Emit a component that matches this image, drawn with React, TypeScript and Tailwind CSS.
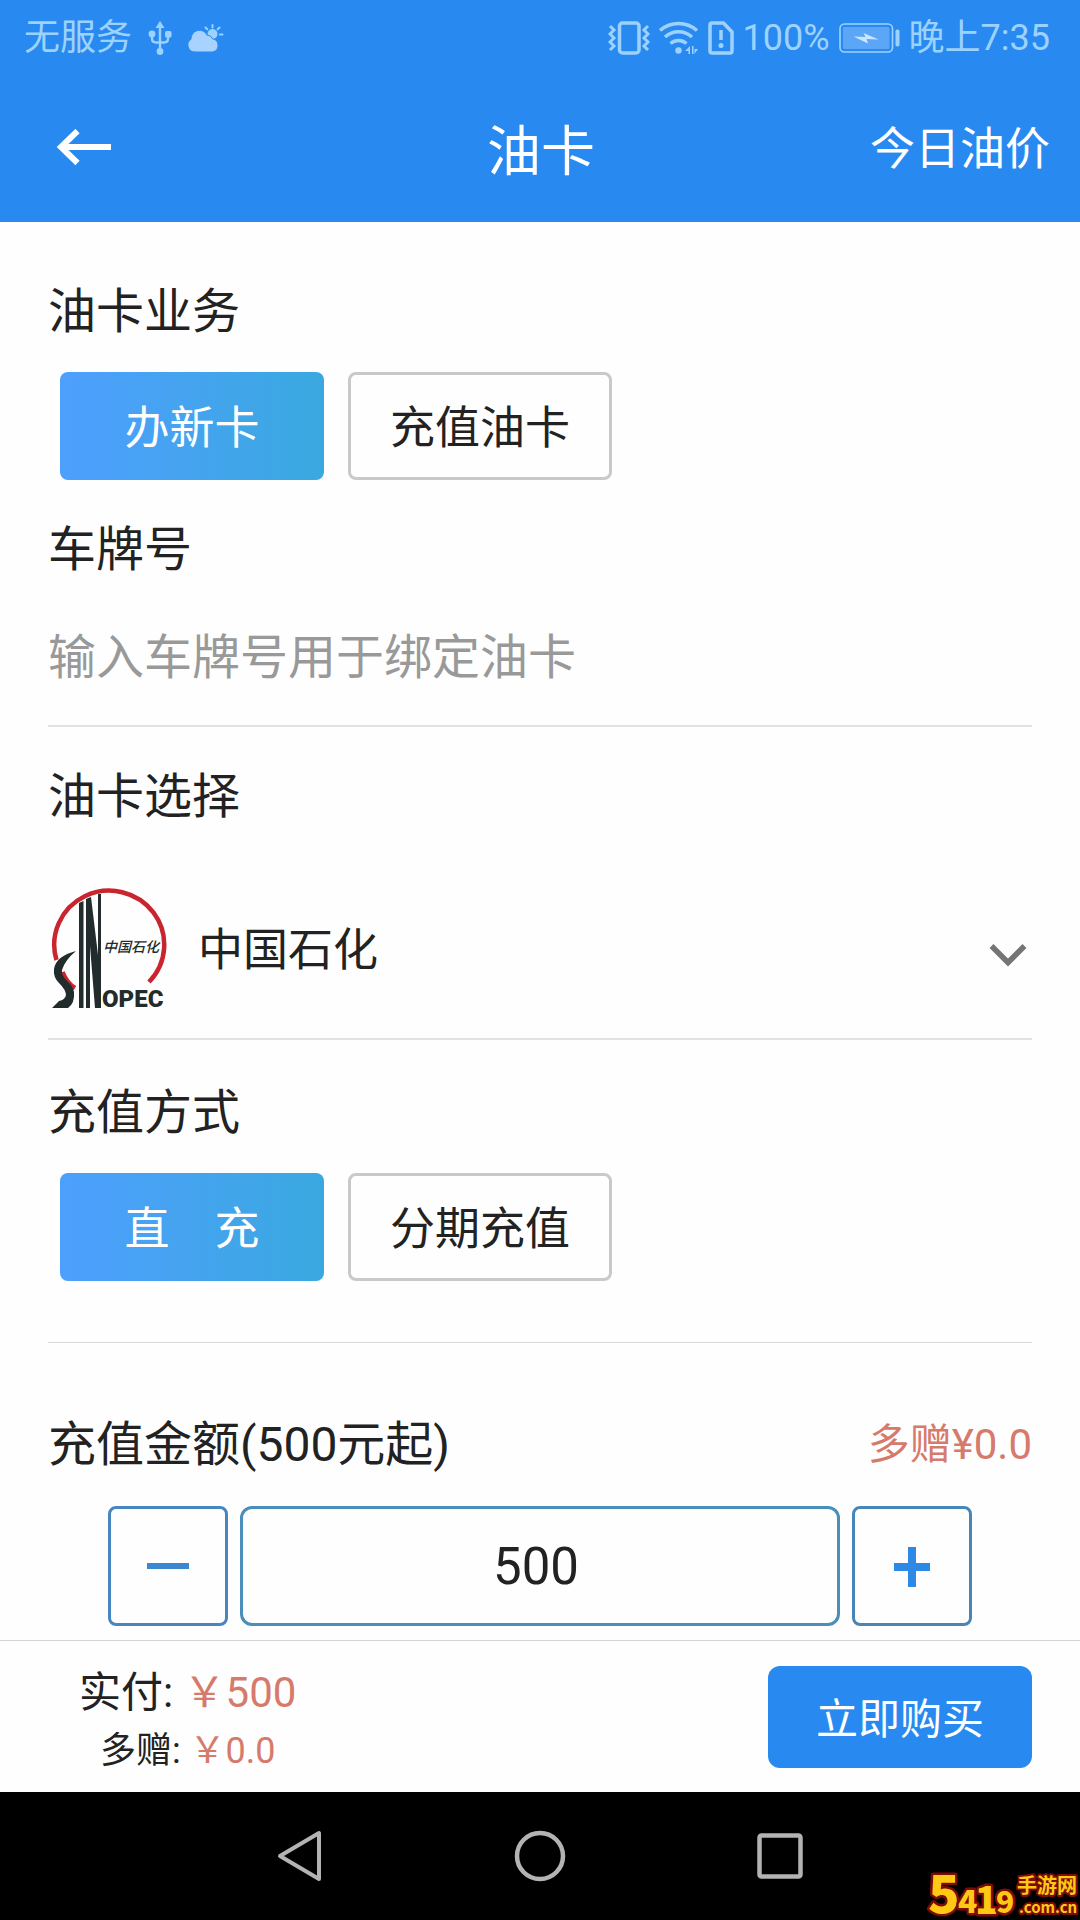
import React, { useState } from 'react';

const SERVICES = ['办新卡', '充值油卡'];
const METHODS = ['直　充', '分期充值'];
const CARDS = ['中国石化', '中国石油'];
const STEP = 100;
const MIN_AMOUNT = 500;

function UsbIcon() {
  return (
    <svg className="w-6 h-[34px]" viewBox="0 0 24 34" fill="none" stroke="currentColor" strokeWidth="2.400">
      <path d="M12 5v25M4 15v2.500q0 4 4 4h8q4 0 4-4V15" />
      <path d="M12 0l4.500 7h-9z" fill="currentColor" stroke="none" />
      <circle cx="4" cy="13" r="3.400" fill="currentColor" stroke="none" />
      <rect x="17" y="10" width="6.500" height="6.500" rx="1.500" fill="currentColor" stroke="none" />
      <circle cx="12" cy="30.500" r="3.400" fill="currentColor" stroke="none" />
    </svg>
  );
}

function WeatherIcon() {
  return (
    <svg className="w-9 h-[30px]" viewBox="0 0 36 30">
      <g stroke="currentColor" strokeWidth="2" strokeLinecap="round">
        <path d="M24.500 2v2.500M17.500 4.500l1.800 1.800M31.500 4.500l-1.800 1.800M32 11.500h2.500" />
      </g>
      <circle cx="24.500" cy="11" r="5" fill="currentColor" />
      <path
        d="M7 29a7 7 0 0 1-4-12.800 8.500 8.500 0 0 1 16.200-4 5.500 5.500 0 0 1 5.300 3.600 6.700 6.700 0 0 1 0 13.200z"
        fill="#a8d2ff"
        stroke="#288af0"
        strokeWidth="1"
      />
    </svg>
  );
}

function VibrateIcon() {
  return (
    <svg className="w-[42px] h-[34px]" viewBox="0 0 42 34" fill="none" stroke="currentColor">
      <rect x="11.500" y="2" width="19.500" height="30" rx="3" strokeWidth="3.500" />
      <path d="M2 5l4 4-4 4 4 4-4 4 4 4-4 4M40 5l-4 4 4 4-4 4 4 4-4 4 4 4" strokeWidth="3" />
    </svg>
  );
}

function WifiIcon() {
  return (
    <svg className="w-10 h-[34px]" viewBox="0 0 40 34" fill="none" stroke="currentColor" strokeWidth="3.400">
      <path d="M1 9.500a28 28 0 0 1 37 0M6 16a20 20 0 0 1 27 0M11.500 22.500a12 12 0 0 1 16 0" />
      <circle cx="19.500" cy="29.500" r="3.200" fill="currentColor" stroke="none" />
      <path d="M31 25v8h-1.500v-3H26zM33 25h1.500v8H33zM35.500 33v-5H39z" fill="currentColor" stroke="none" />
    </svg>
  );
}

function SimIcon() {
  return (
    <svg className="w-[26px] h-[34px]" viewBox="0 0 26 34" fill="none" stroke="currentColor" strokeWidth="3.500">
      <path d="M4 2h11.500l8.500 9v19q0 2-2 2H4q-2 0-2-2V4q0-2 2-2z" />
      <path d="M13 9v10" />
      <circle cx="13" cy="24.500" r="2.500" fill="currentColor" stroke="none" />
    </svg>
  );
}

function BatteryIcon() {
  return (
    <svg className="w-[61px] h-[30px]" viewBox="0 0 61 30">
      <rect x="1" y="1" width="52.500" height="28" rx="4.500" fill="none" stroke="currentColor" strokeWidth="1.600" />
      <rect x="4" y="4" width="46.500" height="22" rx="1.500" fill="#5ba6f7" />
      <rect x="56.500" y="6.500" width="4" height="17" rx="1.800" fill="currentColor" />
      <path d="M14.500 13.500L26.500 14l-2-4L39.500 16.500 27.500 16l1.500 4.500z" fill="#cbe7ff" />
    </svg>
  );
}

function BackArrow() {
  return (
    <svg className="w-14 h-10" viewBox="0 0 56 40" fill="none" stroke="white" strokeWidth="6">
      <path d="M55 18H5M21.500 2L5 18l16.500 16" />
    </svg>
  );
}

function SinopecLogo() {
  return (
    <svg className="w-[120px] h-[126px] shrink-0" viewBox="0 2 120 126" aria-hidden="true">
      <path d="M8.500 74A55 54 0 1 1 101 96M14.500 86Q19 97 27 102" fill="none" stroke="#c9252e" strokeWidth="4.500" />
      {/* swoosh on the left of the derrick */}
      <path
        d="M28 65Q8 70 6 83Q5 91 11 97Q18 104 18 109Q17 114 11 115L4 122H20Q27 117 26 106Q25 100 19 95Q13 89 14 84Q17 74 28 65z"
        fill="#222c2c"
      />
      <path d="M31 17l4.500-2v107H31zM38 13l5-2 7 58V8h3v114h-6l-5-62V122H38z" fill="#222c2c" />
      <g fill="#222c2c">
        <text x="55" y="66" fontSize="14" fontStyle="italic" fontWeight="500" fontFamily="'Noto Sans CJK SC', sans-serif">
          中国石化
        </text>
        <text x="54" y="121" fontSize="24" fontWeight="900" fontFamily="Roboto, sans-serif">
          OPEC
        </text>
      </g>
    </svg>
  );
}

function SiteBadge() {
  return (
    <svg
      className="w-[156px] h-[60px]"
      viewBox="0 0 156 60"
      fill="#ffc814"
      stroke="#7e0c06"
      strokeWidth="5"
      strokeLinejoin="round"
      paintOrder="stroke"
      fontWeight="900"
      fontFamily="'Noto Sans CJK SC', sans-serif"
    >
      <text x="4" y="53" fontSize="52">5</text>
      <text x="34" y="53" fontSize="32">4</text>
      <text x="51" y="54" fontSize="38">1</text>
      <text x="72" y="53" fontSize="30">9</text>
      <g strokeWidth="4" fontWeight="700">
        <text x="93" y="33" fontSize="20">手游网</text>
        <text x="95" y="53" fontSize="15">.com.cn</text>
      </g>
    </svg>
  );
}

type SegmentProps = {
  options: string[];
  value: string;
  onChange: (v: string) => void;
};

function Segment({ options, value, onChange }: SegmentProps) {
  return (
    <div className="mt-[30px] flex gap-6 px-3">
      {options.map((item) => (
        <button
          key={item}
          type="button"
          aria-pressed={item === value}
          onClick={() => onChange(item)}
          className={
            item === value
              ? 'h-[108px] w-[264px] rounded-lg bg-linear-to-r from-[#4d9ffd] to-[#3aa8e0] pt-1.5 text-[45px] text-white'
              : 'h-[108px] w-[264px] rounded-lg border-3 border-[#c9c8cb] pt-1.5 text-[45px]'
          }
        >
          {item}
        </button>
      ))}
    </div>
  );
}

export default function App() {
  const [service, setService] = useState(SERVICES[0]);
  const [method, setMethod] = useState(METHODS[0]);
  const [amount, setAmount] = useState(MIN_AMOUNT);

  return (
    <div className="relative flex min-h-screen flex-col bg-[#fefefe] font-['Roboto','Noto_Sans_CJK_SC',sans-serif] text-[#222]">
      {/* Status bar */}
      <div className="flex h-19 items-center justify-between bg-[#288af0] pl-6 pr-[30px] text-4xl text-[#9dd2ff]">
        <div className="flex items-center gap-4">
          <span>无服务</span>
          <UsbIcon />
          <WeatherIcon />
        </div>
        <div className="flex items-center gap-[9px]">
          <VibrateIcon />
          <WifiIcon />
          <SimIcon />
          <span>100%</span>
          <BatteryIcon />
          <span>晚上7:35</span>
        </div>
      </div>

      {/* Title bar */}
      <header className="grid h-[146px] grid-cols-3 items-center bg-[#288af0] pl-14 pr-[30px] text-white">
        <button type="button" aria-label="返回" className="justify-self-start">
          <BackArrow />
        </button>
        <h1 className="-ml-6 pt-2 text-center text-[54px] leading-none">油卡</h1>
        <a href="#price" className="justify-self-end text-[45px] leading-none">
          今日油价
        </a>
      </header>

      <main className="flex-1 px-12 pt-15">
        <h2 className="text-5xl leading-[60px]">油卡业务</h2>
        <Segment options={SERVICES} value={service} onChange={setService} />

        <label htmlFor="plate" className="mt-10 block text-5xl leading-[60px]">
          车牌号
        </label>
        <input
          id="plate"
          type="text"
          placeholder="输入车牌号用于绑定油卡"
          className="h-[147px] w-full border-b-2 border-[#e2e2e4] pt-2.5 text-5xl outline-none placeholder:text-[#999]"
        />

        <label htmlFor="card" className="mt-10 block text-5xl leading-[60px]">
          油卡选择
        </label>
        <div className="mt-9 flex h-[177px] items-center border-b-2 border-[#e2e2e4]">
          <SinopecLogo />
          <div className="relative flex-1">
            <select id="card" className="block h-20 w-full appearance-none bg-transparent pl-[30px] text-[45px] outline-none">
              {CARDS.map((c) => (
                <option key={c}>{c}</option>
              ))}
            </select>
            <svg
              className="pointer-events-none absolute top-8 right-1 h-6 w-10"
              viewBox="0 0 40 24"
              fill="none"
              stroke="#757575"
              strokeWidth="5.500"
            >
              <path d="M3.500 3L20 19.500 36.500 3" />
            </svg>
          </div>
        </div>

        <h2 className="mt-[43px] text-5xl leading-[60px]">充值方式</h2>
        <Segment options={METHODS} value={method} onChange={setMethod} />
        <hr className="mt-[61px] border-[#d9d9d9]" />

        <div className="mt-[72px] flex items-center justify-between">
          <label htmlFor="amount" className="text-5xl leading-[60px]">
            充值金额(500元起)
          </label>
          <span className="text-[42px] leading-[56px] text-[#d67a6c]">多赠¥0.0</span>
        </div>
        <div className="mt-[31px] flex gap-3 px-15">
          <button
            type="button"
            aria-label="减少"
            onClick={() => setAmount(Math.max(MIN_AMOUNT, amount - STEP))}
            className="flex size-30 shrink-0 items-center justify-center rounded-lg border-3 border-[#4886bf]"
          >
            <svg className="size-12" viewBox="0 0 48 48" stroke="#3b88d0" strokeWidth="6">
              <path d="M3 24h42" />
            </svg>
          </button>
          <input
            id="amount"
            type="text"
            inputMode="numeric"
            value={amount}
            onChange={(e) => setAmount(Number(e.target.value) || 0)}
            className="h-30 min-w-0 flex-1 rounded-xl border-3 border-[#4a8fba] pr-2 text-center text-[51px] outline-none"
          />
          <button
            type="button"
            aria-label="增加"
            onClick={() => setAmount(amount + STEP)}
            className="flex size-30 shrink-0 items-center justify-center rounded-lg border-3 border-[#4886b7]"
          >
            <svg className="size-12" viewBox="0 0 48 48" stroke="#2f88e6" strokeWidth="8">
              <path d="M6 25h36M24 5v40" />
            </svg>
          </button>
        </div>
      </main>

      {/* Pay bar */}
      <footer className="flex h-[152px] items-center justify-between border-t border-[#d4d4d4] pl-[79px] pr-12">
        <div className="pt-2 text-center">
          <p className="text-[42px] leading-[60px]">
            实付: <span className="text-[#d67a6c]">￥{amount}</span>
          </p>
          <p className="text-4xl leading-[56px]">
            多赠: <span className="text-[#d67a6c]">￥0.0</span>
          </p>
        </div>
        <button type="button" className="h-[102px] w-[264px] rounded-xl bg-[#288af0] pt-1.5 text-[42px] text-white">
          立即购买
        </button>
      </footer>

      {/* System navigation */}
      <nav className="flex h-32 items-center justify-center gap-46 bg-black text-[#b3b3b3]">
        <button type="button" aria-label="后退">
          <svg className="size-14" viewBox="0 0 56 56" fill="none" stroke="currentColor" strokeWidth="4" strokeLinejoin="round">
            <path d="M47 5v46L8 28z" />
          </svg>
        </button>
        <button type="button" aria-label="主页">
          <svg className="size-14" viewBox="0 0 56 56" fill="none" stroke="currentColor" strokeWidth="4.500">
            <circle cx="28" cy="28" r="23" />
          </svg>
        </button>
        <button type="button" aria-label="最近任务">
          <svg className="size-14" viewBox="0 0 56 56" fill="none" stroke="currentColor" strokeWidth="4.500">
            <rect x="7.500" y="7.500" width="41" height="41" rx="2" />
          </svg>
        </button>
      </nav>

      <div className="absolute right-0 bottom-0">
        <SiteBadge />
      </div>
    </div>
  );
}
